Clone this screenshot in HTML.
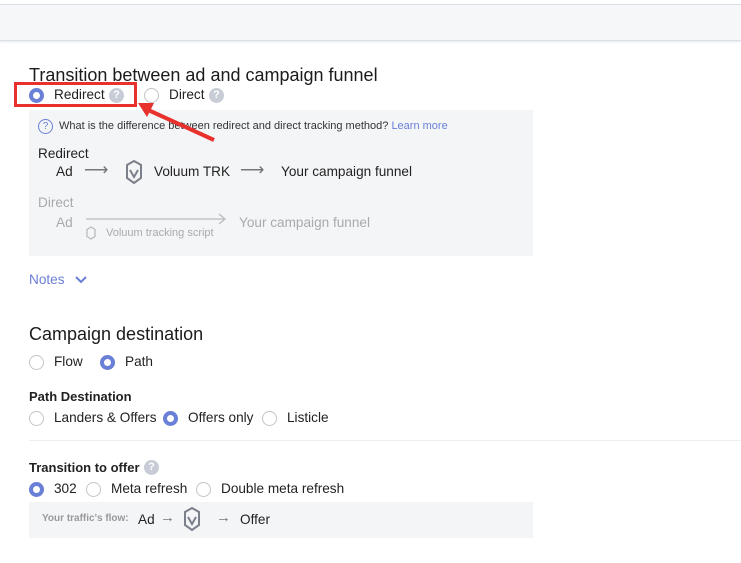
<!DOCTYPE html>
<html><head><style>
body{margin:0;width:741px;height:563px;background:#fff;font-family:"Liberation Sans",sans-serif;color:#222;position:relative;overflow:hidden}
.a{position:absolute;white-space:nowrap}
.r{position:absolute;width:15px;height:15px;border:1px solid #c4c4c4;border-radius:50%;box-sizing:border-box;background:#fff}
.r.on{border:4.5px solid #6a7fd6;background:#fff}
.q{position:absolute;width:15px;height:15px;border-radius:50%;background:#c8ccd6;color:#fff;font-size:11px;font-weight:bold;text-align:center;line-height:15px}
.t14{font-size:13.6px}
</style></head><body>
<div class="a" style="left:0;top:4px;width:741px;height:35px;background:#f6f7f9;border-top:1px solid #dcdfe5;border-bottom:1px solid #dcdfe5;box-shadow:0 1px 2px #e6e8ec"></div>
<div class="a" style="left:29px;top:65px;font-size:18px;color:#1b1b1b">Transition between ad and campaign funnel</div>
<div class="r on" style="left:29px;top:88px"></div>
<div class="a t14" style="left:54px;top:87px">Redirect</div>
<div class="q" style="left:109px;top:88px">?</div>
<div class="r" style="left:144px;top:88px"></div>
<div class="a t14" style="left:169px;top:87px">Direct</div>
<div class="q" style="left:209px;top:88px">?</div>
<div class="a" style="left:14px;top:82px;width:123px;height:25px;border:3px solid #e8302c;box-sizing:border-box"></div>
<div class="a" style="left:29px;top:110px;width:504px;height:146px;background:#f4f5f7"></div>
<div class="a" style="left:38px;top:119px;width:13px;height:13px;border:1.5px solid #6a7fd6;border-radius:50%;color:#6a7fd6;font-size:10px;text-align:center;line-height:13px">?</div>
<div class="a" style="left:59px;top:120px;font-size:11px;color:#333">What is the difference between redirect and direct tracking method? <span style="color:#6a7fd6">Learn more</span></div>
<div class="a t14" style="left:38px;top:146px;color:#222">Redirect</div>
<div class="a t14" style="left:56px;top:164px">Ad</div>
<div class="a" style="left:84px;top:160px;font-size:17px;color:#777">⟶</div>
<svg class="a" style="left:126px;top:160px" width="16" height="24" viewBox="0 0 16 24"><path d="M8 1 L15 5 V18 L8 23 L1 18 V5 Z" fill="none" stroke="#7b7f8a" stroke-width="2"/><path d="M4 10 L8 17 L12 10" fill="none" stroke="#7b7f8a" stroke-width="2"/></svg>
<div class="a t14" style="left:154px;top:164px">Voluum TRK</div>
<div class="a" style="left:240px;top:160px;font-size:17px;color:#777">⟶</div>
<div class="a t14" style="left:281px;top:164px">Your campaign funnel</div>
<div class="a t14" style="left:38px;top:195px;color:#aaa">Direct</div>
<div class="a t14" style="left:56px;top:215px;color:#aaa">Ad</div>
<svg class="a" style="left:86px;top:212px" width="142" height="14" viewBox="0 0 142 14"><line x1="0" y1="7" x2="139" y2="7" stroke="#bbb" stroke-width="1.3"/><path d="M133 2 L139 7 L133 12" fill="none" stroke="#bbb" stroke-width="1.3"/></svg>
<svg class="a" style="left:86px;top:226px" width="10" height="14" viewBox="0 0 10 14"><path d="M5 1 L9 3.5 V10.5 L5 13 L1 10.5 V3.5 Z" fill="none" stroke="#bbb" stroke-width="1.3"/></svg>
<div class="a" style="left:106px;top:227px;font-size:11px;color:#aaa">Voluum tracking script</div>
<div class="a t14" style="left:239px;top:215px;color:#aaa">Your campaign funnel</div>
<div class="a t14" style="left:29px;top:272px;color:#6a7fd6">Notes</div>
<svg class="a" style="left:74px;top:275px" width="14" height="10" viewBox="0 0 14 10"><path d="M2 2 L7 7 L12 2" fill="none" stroke="#6a7fd6" stroke-width="2"/></svg>
<div class="a" style="left:29px;top:324px;font-size:18px;color:#1b1b1b">Campaign destination</div>
<div class="r" style="left:29px;top:355px"></div>
<div class="a t14" style="left:54px;top:354px">Flow</div>
<div class="r on" style="left:100px;top:355px"></div>
<div class="a t14" style="left:125px;top:354px">Path</div>
<div class="a" style="left:29px;top:389px;font-size:13px;font-weight:bold">Path Destination</div>
<div class="r" style="left:29px;top:411px"></div>
<div class="a t14" style="left:54px;top:410px">Landers &amp; Offers</div>
<div class="r on" style="left:163px;top:411px"></div>
<div class="a t14" style="left:188px;top:410px">Offers only</div>
<div class="r" style="left:262px;top:411px"></div>
<div class="a t14" style="left:287px;top:410px">Listicle</div>
<div class="a" style="left:29px;top:440px;width:712px;height:1px;background:#eceef1"></div>
<div class="a" style="left:29px;top:460px;font-size:13px;font-weight:bold">Transition to offer</div>
<div class="q" style="left:144px;top:460px">?</div>
<div class="r on" style="left:29px;top:482px"></div>
<div class="a t14" style="left:54px;top:481px">302</div>
<div class="r" style="left:86px;top:482px"></div>
<div class="a t14" style="left:111px;top:481px">Meta refresh</div>
<div class="r" style="left:196px;top:482px"></div>
<div class="a t14" style="left:221px;top:481px">Double meta refresh</div>
<div class="a" style="left:29px;top:502px;width:504px;height:36px;background:#f4f5f7"></div>
<div class="a" style="left:42px;top:513px;font-size:10px;font-weight:bold;color:#999">Your traffic's flow:</div>
<div class="a t14" style="left:138px;top:512px">Ad</div>
<div class="a" style="left:160px;top:509px;font-size:15px;color:#777">→</div>
<svg class="a" style="left:184px;top:507px" width="16" height="24" viewBox="0 0 16 24"><path d="M8 1 L15 5 V18 L8 23 L1 18 V5 Z" fill="none" stroke="#7b7f8a" stroke-width="2"/><path d="M4 10 L8 17 L12 10" fill="none" stroke="#7b7f8a" stroke-width="2"/></svg>
<div class="a" style="left:216px;top:509px;font-size:15px;color:#777">→</div>
<div class="a t14" style="left:240px;top:512px">Offer</div>
<svg class="a" style="left:130px;top:95px" width="90" height="50" viewBox="0 0 90 50"><line x1="84" y1="45" x2="16" y2="14" stroke="#e8302c" stroke-width="4"/><path d="M8 8 L24 8 L17 22 Z" fill="#e8302c"/></svg>
</body></html>
